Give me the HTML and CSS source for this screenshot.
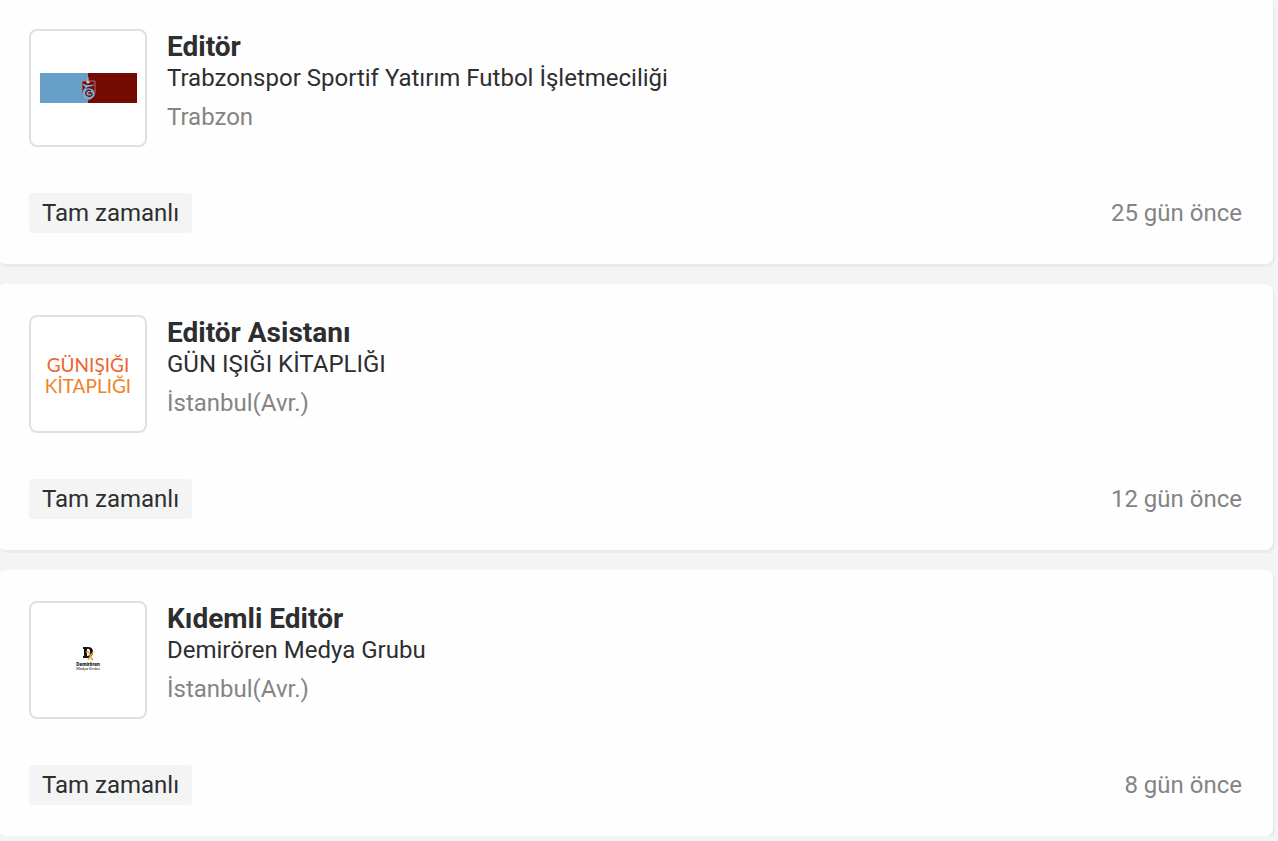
FILE: index.html
```
<!DOCTYPE html>
<html lang="tr">
<head>
<meta charset="UTF-8" />
<meta name="viewport" content="width=device-width, initial-scale=1" />
<title>İş İlanları</title>
<link rel="stylesheet" href="styles.css">
</head>
<body>

<main class="job-list">
  <article class="job-card">
    <div class="job-header">
      <div class="logo">
        <svg width="98" height="30" viewBox="0 0 98 30" role="img" aria-label="Trabzonspor">
          <rect x="1" width="48" height="30" fill="#679fc8" />
          <rect x="49" width="49" height="30" fill="#740b02" />
          <path d="M43 8h13v11q0 5-6.500 8q-6.500-3-6.500-8z" fill="#740b02" stroke="#b58f98" stroke-width=".8" />
          <path d="M43.500 10.500q4 1.500 6 1.500q5 0 6-1.500-1 3-4 3-4 0-5 3 2-2 5-1 4 1 4 5 0 5-6 6-6-1-6-6 0-4 3-6-2-1-3-4z" fill="#75add7" />
          <path d="M52 18q-3-2-5 1-1 3 2 4 4 1 4-2-1-2-3-1l1 1" fill="none" stroke="#740b02" stroke-width="1.300" />
          <path d="M49 4v3" stroke="#d9c3bd" stroke-width="1" />
          <circle cx="49" cy="9" r="1.600" fill="#e6ceb9" />
        </svg>
      </div>
      <div class="job-info">
        <h2>Editör</h2>
        <p class="company">Trabzonspor Sportif Yatırım Futbol İşletmeciliği</p>
        <p class="city">Trabzon</p>
      </div>
    </div>
    <div class="job-footer">
      <span class="tag">Tam zamanlı</span>
      <span class="date">25 gün önce</span>
    </div>
  </article>

  <article class="job-card">
    <div class="job-header">
      <div class="logo">
        <svg class="gunisigi" width="98" height="60" viewBox="0 0 98 60" role="img" aria-label="Günışığı Kitaplığı">
          <text x="49" y="28" fill="#ed642f">GÜNIŞIĞI</text>
          <text x="49" y="49" fill="#ef8228">KİTAPLIĞI</text>
        </svg>
      </div>
      <div class="job-info">
        <h2>Editör Asistanı</h2>
        <p class="company">GÜN IŞIĞI KİTAPLIĞI</p>
        <p class="city">İstanbul(Avr.)</p>
      </div>
    </div>
    <div class="job-footer">
      <span class="tag">Tam zamanlı</span>
      <span class="date">12 gün önce</span>
    </div>
  </article>

  <article class="job-card">
    <div class="job-header">
      <div class="logo">
        <svg class="demiroren" width="40" height="36" viewBox="0 0 40 36" role="img" aria-label="Demirören Medya Grubu">
          <path fill-rule="evenodd" d="M15 5h5q5 0 5 5t-5 6h-5v-2h1V7h-1zM19 7v7q3 0 3-4t-3-3z" fill="#17130f" />
          <path d="M18 10q3-1 4 3t3 5M25 10l-5 8" fill="none" stroke="#e4a62d" stroke-width="1.4" />
          <text class="brand" x="20" y="24">Demirören</text>
          <text x="20" y="28">Medya Grubu</text>
        </svg>
      </div>
      <div class="job-info">
        <h2>Kıdemli Editör</h2>
        <p class="company">Demirören Medya Grubu</p>
        <p class="city">İstanbul(Avr.)</p>
      </div>
    </div>
    <div class="job-footer">
      <span class="tag">Tam zamanlı</span>
      <span class="date">8 gün önce</span>
    </div>
  </article>
</main>

</body>
</html>
```
FILE: styles.css
```
* {
  box-sizing: border-box;
}
body {
  margin: 0;
  background: #f4f4f4;
  color: #2d2e30;
  font-family: Roboto, sans-serif;
  font-size: 24px;
  line-height: 32px;
}
h2,
p {
  margin: 0;
}
.job-list {
  display: flex;
  flex-direction: column;
  gap: 20px;
  margin: -2px 5px 0 -2px;
}
.job-card {
  padding: 31px;
  background: #fefefe;
  border-radius: 8px;
  box-shadow: 2px 3px 0 #ebebeb;
}
.job-header {
  display: flex;
  gap: 20px;
}
.logo {
  display: flex;
  flex-shrink: 0;
  align-items: center;
  justify-content: center;
  width: 118px;
  height: 118px;
  border: 2px solid #dee0e4;
  border-radius: 8px;
  background: #fff;
}
.gunisigi {
  font-family: Lato, sans-serif;
  font-size: 19px;
  text-anchor: middle;
}
.demiroren {
  fill: #24201d;
  font-family: Roboto, sans-serif;
  font-size: 4px;
  text-anchor: middle;
}
.brand {
  font-size: 5px;
  font-weight: 900;
}
.job-info {
  padding-top: 2px;
}
.job-info h2 {
  font-size: 28px;
  font-weight: 700;
  line-height: 31px;
}
.city {
  margin-top: 7px;
  color: #848484;
}
.job-footer {
  display: flex;
  align-items: center;
  justify-content: space-between;
  margin-top: 46px;
}
.tag {
  padding: 4px 13px;
  border-radius: 4px;
  background: #f4f4f4;
}
.date {
  color: #848484;
}
```
